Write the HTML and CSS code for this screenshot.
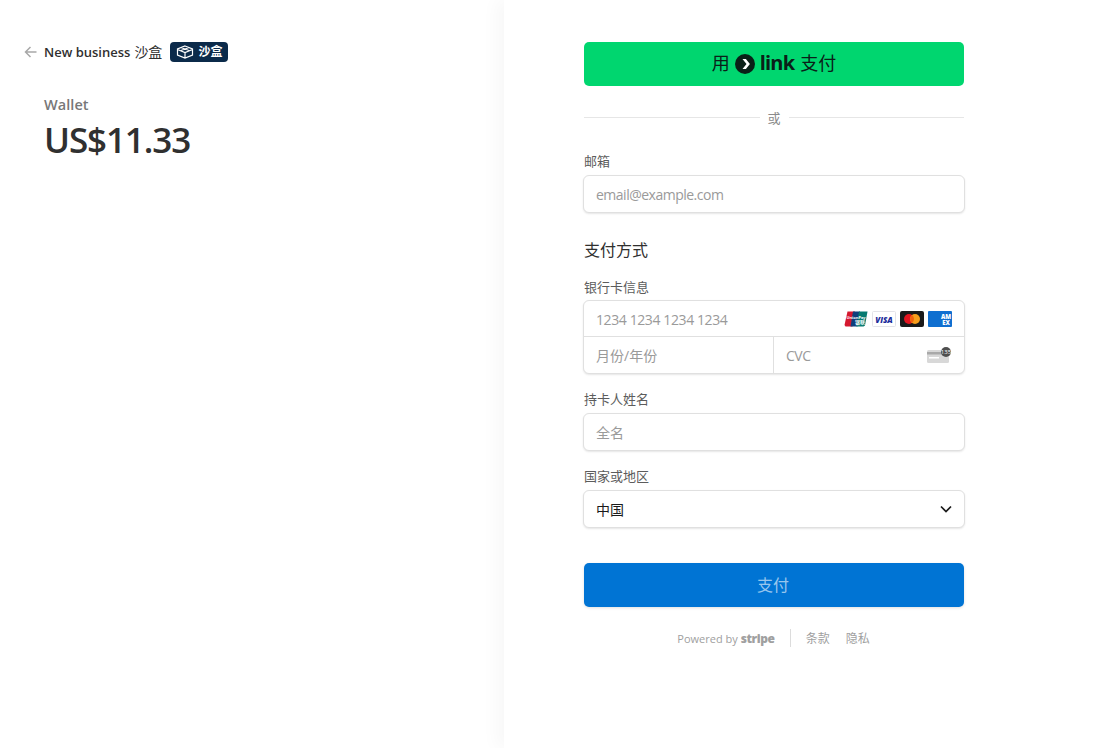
FILE: index.html
```html
<!DOCTYPE html>
<html lang="en">
<head>
  <meta charset="UTF-8">
  <title>Checkout</title>
  <link rel="stylesheet" href="styles.css">
</head>
<body>
  <div class="summary">
    <div class="header">
      <svg class="back" width="13" height="12" viewBox="0 0 13 12"><path d="M12.5 6H1.5M6.5 1 1.5 6l5 5" fill="none" stroke="#a8a8a8" stroke-width="1.5"/></svg>
      <span class="business">New business</span>
      <span class="sandbox">沙盒</span>
      <span class="badge">
        <svg width="18" height="14" viewBox="0 0 18 14"><path d="M9 1 16.5 4v6L9 13 1.5 10V4zM1.5 4.5 9 7.5l7.5-3M9 7.5V13M5 2.5l8 3M13 2.5l-8 3" fill="none" stroke="#fff" stroke-width="1.2"/></svg>
        沙盒
      </span>
    </div>
    <div class="product">Wallet</div>
    <div class="price">US$11.33</div>
  </div>

  <div class="pay">
    <div class="form">
      <button class="link-btn">
        用
        <svg class="link-mark" width="20" height="20" viewBox="0 0 20 20"><circle cx="10" cy="10" r="10" fill="#0a2018"/><path d="M7.5 5h3.4l4 5-4 5H7.5l4-5z" fill="#fff"/></svg>
        <span class="link-word">link</span>
        支付
      </button>

      <div class="divider"><span>或</span></div>

      <label class="label">邮箱</label>
      <div class="field"><span class="ph latin">email@example.com</span></div>

      <h3 class="section">支付方式</h3>

      <label class="label">银行卡信息</label>
      <div class="card-box">
        <div class="card-row">
          <span class="ph latin digits">1234 1234 1234 1234</span>
          <span class="brands">
            <svg width="24" height="16" viewBox="0 0 24 16">
              <path d="M3.5 0.5H11L8.5 15.5H1.5L0.5 14z" fill="#d5182f"/>
              <path d="M9 0.5H16L13.5 15.5H6.5z" fill="#0f3f7c"/>
              <path d="M15 0.5H23.5L21 14.5 19.5 15.5H12.5z" fill="#067a70"/>
              <text x="12" y="7.5" class="up-text">UnionPay</text>
              <text x="16" y="13" class="up-cjk">银联</text>
            </svg>
            <svg width="24" height="16" viewBox="0 0 24 16">
              <rect x=".5" y=".5" width="23" height="15" rx="1" fill="#fff" stroke="#e3e3e8"/>
              <text x="12" y="11.5" class="visa">VISA</text>
            </svg>
            <svg width="24" height="16" viewBox="0 0 24 16">
              <rect width="24" height="16" rx="2" fill="#1a1a1a"/>
              <circle cx="9" cy="8" r="5" fill="#e3141f"/>
              <circle cx="15" cy="8" r="5" fill="#f79e1b"/>
              <path d="M12 4a5 5 0 0 1 0 8 5 5 0 0 1 0-8z" fill="#f3620c"/>
            </svg>
            <svg width="24" height="16" viewBox="0 0 24 16">
              <rect width="24" height="16" rx="1" fill="#0f6fd0"/>
              <text x="18" y="7.5" class="amex">AM</text>
              <text x="18" y="13.5" class="amex">EX</text>
            </svg>
          </span>
        </div>
        <div class="card-split">
          <div class="card-cell expiry"><span class="ph">月份/年份</span></div>
          <div class="card-cell cvc">
            <span class="ph latin">CVC</span>
            <svg width="25" height="16" viewBox="0 0 25 16">
              <rect x="0" y="3" width="22" height="13" rx="1.5" fill="#d8d8d8"/>
              <rect x="0" y="5" width="22" height="2.5" fill="#a9a9a9"/>
              <rect x="2" y="10" width="10" height="1.5" fill="#fff"/>
              <circle cx="19" cy="5" r="5" fill="#4f4f4f"/>
              <text x="19" y="7" class="cvc-num">135</text>
            </svg>
          </div>
        </div>
      </div>

      <label class="label">持卡人姓名</label>
      <div class="field"><span class="ph">全名</span></div>

      <label class="label">国家或地区</label>
      <div class="field select">
        <span>中国</span>
        <svg width="12" height="8" viewBox="0 0 12 8"><path d="M1 1.5 6 6.5l5-5" fill="none" stroke="#1a1a1a" stroke-width="1.7"/></svg>
      </div>

      <button class="submit">支付</button>

      <div class="footer">
        <span class="powered">Powered by <b>stripe</b></span>
        <span class="sep"></span>
        <span class="foot-link">条款</span>
        <span class="foot-link">隐私</span>
      </div>
    </div>
  </div>
</body>
</html>
```

FILE: styles.css
```css
body {
  margin: 0;
  height: 748px;
  overflow: hidden;
  display: flex;
  background-color: #fff;
  color: #303030;
  font-family: "Open Sans", "Noto Sans CJK SC", sans-serif;
}
.summary {
  width: 504px;
  box-sizing: border-box;
  padding: 42px 0 0 24px;
}
.header {
  display: flex;
  align-items: center;
  height: 20px;
  font-size: 13px;
  line-height: 18px;
}
.back {
  margin-right: 7px;
}
.business {
  font-weight: 600;
  color: #303030;
}
.sandbox {
  margin-left: 4px;
  font-size: 14px;
  color: #303030;
}
.badge {
  display: flex;
  align-items: center;
  gap: 4px;
  margin-left: 8px;
  padding: 0 6px;
  height: 20px;
  background-color: #0b2a4a;
  border-radius: 4px;
  color: #fff;
  font-size: 12px;
  font-weight: 700;
}
.product {
  margin: 33px 0 0 20px;
  font-size: 14.5px;
  line-height: 20px;
  font-weight: 600;
  letter-spacing: 0.05px;
  color: #787878;
}
.price {
  margin: 4px 0 0 20px;
  font-size: 35px;
  line-height: 42px;
  font-weight: 600;
  letter-spacing: -1.1px;
  color: #303030;
}
.pay {
  flex: 1;
  box-shadow: -8px 0 16px rgba(0, 0, 0, 0.03);
  padding: 42px 0 0 80px;
}
.form {
  width: 380px;
}
button {
  display: flex;
  align-items: center;
  justify-content: center;
  width: 100%;
  border: none;
  border-radius: 5px;
  font-family: inherit;
}
.link-btn {
  height: 44px;
  gap: 5px;
  padding-bottom: 5px;
  background-color: #00d66f;
  color: #0a2018;
  font-size: 18px;
}
.link-mark {
  margin-top: 3px;
}
.link-word {
  font-size: 20px;
  font-weight: 700;
  letter-spacing: -0.8px;
  line-height: 24px;
  margin: 2px 1px 0 0;
}
.divider {
  display: flex;
  align-items: center;
  gap: 7px;
  margin-top: 21px;
  height: 20px;
  font-size: 13px;
  color: #8a8a8a;
}
.divider::before, .divider::after {
  content: "";
  flex: 1;
  height: 1px;
  background-color: #e6e6e6;
}
.divider span {
  padding: 0 1px;
}
.label {
  display: block;
  margin-top: 15px;
  font-size: 13px;
  line-height: 20px;
  color: #5c5c5c;
}
.divider + .label {
  margin-top: 24px;
}
.field {
  display: flex;
  align-items: center;
  box-sizing: border-box;
  width: 382px;
  margin: 4px 0 0 -1px;
  height: 38px;
  padding: 0 12px;
  background-color: #fff;
  border: 1px solid #e0e0e0;
  border-radius: 6px;
  box-shadow: 0 1px 2px rgba(0, 0, 0, 0.1);
  font-size: 14px;
}
.ph {
  color: #9a9a9a;
  font-size: 14px;
}
.latin {
  letter-spacing: -0.5px;
}
.digits {
  padding-top: 2px;
  letter-spacing: -0.4px;
}
.select {
  justify-content: space-between;
  color: #1a1a1a;
}
.section {
  margin: 26px 0 0;
  font-size: 16px;
  line-height: 22px;
  font-weight: 400;
  color: #303030;
}
.section + .label {
  margin-top: 16px;
}
.card-box {
  box-sizing: border-box;
  width: 382px;
  margin: 3px 0 11px -1px;
  background-color: #fff;
  border: 1px solid #e0e0e0;
  border-radius: 6px;
  box-shadow: 0 1px 2px rgba(0, 0, 0, 0.1);
}
.card-row {
  display: flex;
  align-items: center;
  justify-content: space-between;
  height: 35px;
  padding: 0 12px;
  border-bottom: 1px solid #e0e0e0;
}
.brands {
  display: flex;
  gap: 4px;
}
.up-text {
  font-size: 4px;
  font-weight: 700;
  fill: #fff;
  text-anchor: middle;
}
.up-cjk {
  font-size: 5px;
  font-weight: 700;
  fill: #fff;
  text-anchor: middle;
}
.visa {
  font-size: 8px;
  font-weight: 800;
  font-style: italic;
  fill: #1a2b9b;
  text-anchor: middle;
}
.amex {
  font-size: 6px;
  font-weight: 800;
  fill: #fff;
  text-anchor: middle;
}
.cvc-num {
  font-size: 6px;
  fill: #fff;
  text-anchor: middle;
}
.card-split {
  display: flex;
  height: 36px;
}
.card-cell {
  flex: 1;
  display: flex;
  align-items: center;
  padding: 0 12px;
}
.expiry {
  flex: 0 0 165px;
}
.cvc {
  justify-content: space-between;
  border-left: 1px solid #e0e0e0;
}
.submit {
  height: 44px;
  margin-top: 35px;
  padding: 0 2px 2px 0;
  background-color: #0074d4;
  color: rgba(255, 255, 255, 0.6);
  font-size: 16px;
  box-shadow: 0 1px 3px rgba(0, 0, 0, 0.12);
}
.footer {
  display: flex;
  align-items: center;
  justify-content: center;
  margin-top: 22px;
  height: 18px;
  padding-right: 1px;
  font-size: 12px;
  color: #a0a0a0;
}
.powered {
  font-size: 11px;
}
.powered b {
  font-weight: 800;
  font-size: 12px;
  letter-spacing: -0.4px;
}
.sep {
  width: 1px;
  height: 18px;
  margin: 0 15px;
  background-color: #dcdcdc;
}
.foot-link + .foot-link {
  margin-left: 16px;
}
```
